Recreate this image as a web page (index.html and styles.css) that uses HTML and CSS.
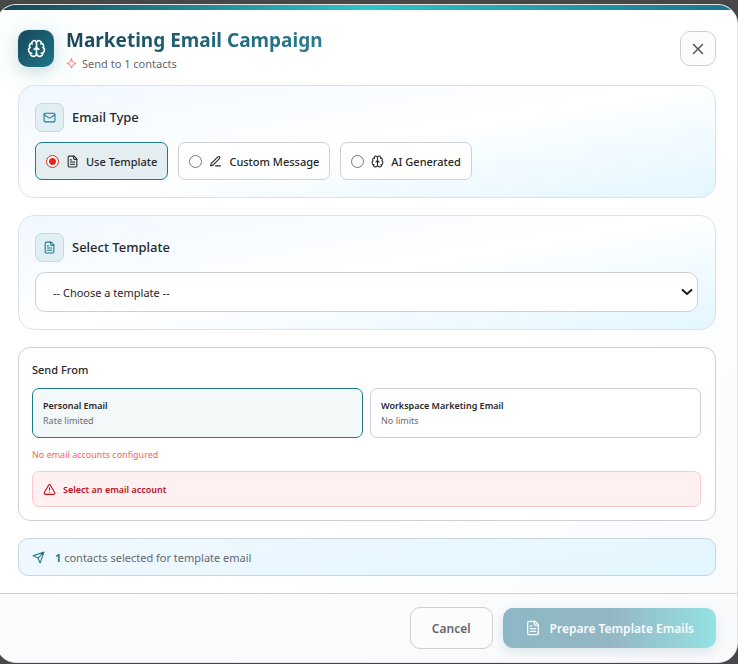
FILE: index.html
```html
<!DOCTYPE html>
<html lang="en">
<head>
    <meta charset="UTF-8">
    <meta name="viewport" content="width=device-width, initial-scale=1.0">
    <title>Marketing Email Campaign</title>
    <link rel="stylesheet" href="styles.css">
</head>
<body>
    <!-- Shared icons -->
    <svg class="sprite" aria-hidden="true">
        <symbol id="icon-brain" viewBox="0 0 24 24">
            <path d="M12 18V5M15 13a4.17 4.17 0 0 1-3-4 4.17 4.17 0 0 1-3 4"/>
            <path d="M17.598 6.5A3 3 0 1 0 12 5a3 3 0 1 0-5.598 1.5"/>
            <path d="M17.997 5.125a4 4 0 0 1 2.526 5.77M18 18a4 4 0 0 0 2-7.464"/>
            <path d="M19.967 17.483A4 4 0 1 1 12 18a4 4 0 1 1-7.967-.517"/>
            <path d="M6 18a4 4 0 0 1-2-7.464M6.003 5.125a4 4 0 0 0-2.526 5.77"/>
        </symbol>
        <symbol id="icon-file" viewBox="0 0 24 24">
            <path d="M15 2H6a2 2 0 0 0-2 2v16a2 2 0 0 0 2 2h12a2 2 0 0 0 2-2V7Z"/>
            <path d="M14 2v4a2 2 0 0 0 2 2h4M10 9H8M16 13H8M16 17H8"/>
        </symbol>
    </svg>

    <div class="modal" role="dialog" aria-labelledby="modal-title">
        <div class="accent-bar"></div>

        <div class="modal-body">
            <header class="modal-header">
                <div class="logo">
                    <svg class="icon"><use href="#icon-brain"/></svg>
                </div>
                <div class="heading">
                    <h1 id="modal-title">Marketing Email Campaign</h1>
                    <p>
                        <svg class="icon sparkle" viewBox="0 0 24 24"><path d="M12 2 14.2 8.2Q14.8 9.4 16 9.9L22 12 16 14.1Q14.8 14.6 14.2 15.8L12 22 9.8 15.8Q9.2 14.6 8 14.1L2 12 8 9.9Q9.2 9.4 9.8 8.2Z"/></svg>
                        Send to 1 contacts
                    </p>
                </div>
                <button type="button" class="close-btn" aria-label="Close">
                    <svg class="icon" viewBox="0 0 24 24"><path d="M18 6 6 18M6 6l12 12"/></svg>
                </button>
            </header>

            <section class="panel">
                <div class="panel-title">
                    <span class="panel-icon">
                        <svg class="icon" viewBox="0 0 24 24"><rect x="2" y="4" width="20" height="16" rx="2"/><path d="m22 7-8.97 5.7a1.94 1.94 0 0 1-2.06 0L2 7"/></svg>
                    </span>
                    <h2>Email Type</h2>
                </div>
                <div class="options">
                    <label class="option active">
                        <input type="radio" name="emailType" checked>
                        <svg class="icon"><use href="#icon-file"/></svg>
                        Use Template
                    </label>
                    <label class="option">
                        <input type="radio" name="emailType">
                        <svg class="icon" viewBox="0 0 24 24"><path d="M12 20h9M16.376 3.622a1 1 0 0 1 3.002 3.002L7.368 18.635a2 2 0 0 1-.855.506l-2.872.838a.5.5 0 0 1-.62-.62l.838-2.872a2 2 0 0 1 .506-.854Z"/></svg>
                        Custom Message
                    </label>
                    <label class="option">
                        <input type="radio" name="emailType">
                        <svg class="icon"><use href="#icon-brain"/></svg>
                        AI Generated
                    </label>
                </div>
            </section>

            <section class="panel">
                <div class="panel-title">
                    <span class="panel-icon">
                        <svg class="icon"><use href="#icon-file"/></svg>
                    </span>
                    <h2><label for="template">Select Template</label></h2>
                </div>
                <div class="select-wrap">
                    <select id="template">
                        <option>-- Choose a template --</option>
                    </select>
                    <svg class="chevron" viewBox="0 0 12 8"><path d="M1 1.5 6 6l5-4.5"/></svg>
                </div>
            </section>

            <section class="send-from">
                <h3>Send From</h3>
                <div class="accounts">
                    <button type="button" class="account active">
                        <strong>Personal Email</strong>
                        <span>Rate limited</span>
                    </button>
                    <button type="button" class="account">
                        <strong>Workspace Marketing Email</strong>
                        <span>No limits</span>
                    </button>
                </div>
                <p class="error-text">No email accounts configured</p>
                <div class="alert">
                    <svg class="icon" viewBox="0 0 24 24"><path d="m21.73 18-8-14a2 2 0 0 0-3.48 0l-8 14A2 2 0 0 0 4 21h16a2 2 0 0 0 1.73-3M12 9v4M12 17h.01"/></svg>
                    Select an email account
                </div>
            </section>

            <div class="summary">
                <svg class="icon" viewBox="0 0 24 24"><path d="M22 2 15 22 11 13 2 9ZM22 2 11 13"/></svg>
                <span><b>1</b> contacts selected for template email</span>
            </div>
        </div>

        <footer class="modal-footer">
            <button type="button" class="cancel-btn">Cancel</button>
            <button type="button" class="submit-btn">
                <svg class="icon"><use href="#icon-file"/></svg>
                Prepare Template Emails
            </button>
        </footer>
    </div>
</body>
</html>
```

FILE: styles.css
```css
* {
    box-sizing: border-box;
}
body {
    margin: 0;
    padding-top: 4px;
    background-color: #474747;
    color: #27272a;
    font-family: "Segoe UI", "Noto Sans", sans-serif;
    font-size: 11px;
    overflow: hidden;
}
h1, h2, h3, p {
    margin: 0;
}
button, select {
    font-family: inherit;
    cursor: pointer;
}
.sprite {
    display: none;
}
.icon {
    width: 13px;
    height: 13px;
    flex: none;
    fill: none;
    stroke: currentColor;
    stroke-width: 2;
    stroke-linecap: round;
    stroke-linejoin: round;
}
.modal {
    margin-left: -4px;
    border: 1px solid #e2e5e8;
    border-radius: 20px;
    background: linear-gradient(135deg, #ffffff 60%, #f8fafc);
    overflow: hidden;
}
.accent-bar {
    height: 5px;
    background: linear-gradient(90deg, #164357, #2ec4c9 50%, #1b7389);
}
.modal-body {
    display: flex;
    flex-direction: column;
    gap: 17px;
    padding: 19px 21px 17px;
}

/* Header */
.modal-header {
    display: flex;
    align-items: center;
    gap: 12px;
    height: 39px;
}
.logo {
    display: flex;
    align-items: center;
    justify-content: center;
    width: 36px;
    height: 37px;
    border-radius: 10px;
    background: linear-gradient(135deg, #1a4759, #1c768a);
    color: #ffffff;
    box-shadow: 0 0 0 1px #e4eef0, 0 6px 14px rgba(26, 71, 89, 0.15), 0 0 40px rgba(46, 196, 182, 0.2);
}
.logo .icon {
    width: 19px;
    height: 19px;
}
.heading {
    flex: 1;
    padding-top: 4px;
}
.heading h1 {
    width: max-content;
    font-size: 19px;
    line-height: 26px;
    font-weight: 700;
    background: linear-gradient(135deg, #1a4456, #2a7f96);
    -webkit-background-clip: text;
    background-clip: text;
    color: transparent;
}
.heading p {
    display: flex;
    align-items: center;
    gap: 5px;
    line-height: 22px;
    color: #66676a;
}
.icon.sparkle {
    width: 11px;
    height: 11px;
    color: #ff6b61;
}
.close-btn {
    display: flex;
    align-items: center;
    justify-content: center;
    width: 36px;
    height: 35px;
    padding: 0;
    border: 1px solid #cdcfd2;
    border-radius: 10px;
    background-color: #fbfcfe;
    color: #555555;
}
.close-btn .icon {
    width: 18px;
    height: 18px;
}

/* Panels */
.panel {
    padding: 17px 17px 17px 16px;
    border: 1px solid #dce3e8;
    border-radius: 16px;
    background: linear-gradient(170deg, #f0f8ff, #ffffff 50%, #e3f6ff);
}
.panel-title {
    display: flex;
    align-items: center;
    gap: 8px;
    margin-bottom: 10px;
}
.panel-title h2 {
    font-size: 13px;
    line-height: 17px;
    font-weight: 500;
}
.panel-icon {
    display: flex;
    align-items: center;
    justify-content: center;
    width: 29px;
    height: 29px;
    border: 1px solid #bfdae2;
    border-radius: 7px;
    background-color: #e1eff4;
    color: #1f7a8c;
}
.options {
    display: flex;
    flex-wrap: wrap;
    gap: 10px;
}
.option {
    display: flex;
    align-items: center;
    gap: 7px;
    height: 38px;
    padding: 0 10px;
    border: 1px solid #cdd0d4;
    border-radius: 7px;
    background-color: #ffffff;
    font-weight: 500;
    cursor: pointer;
}
.option.active {
    border-color: #1f7a8c;
    background-color: #e4eef1;
}
.option input {
    appearance: none;
    width: 13px;
    height: 13px;
    margin: 0;
    border: 1px solid #767676;
    border-radius: 50%;
    background-color: #ffffff;
}
.option input:checked {
    border-color: #e8231a;
    background: radial-gradient(circle, #e8231a 3px, #ffffff 4px);
}
.select-wrap {
    position: relative;
}
.select-wrap select {
    appearance: none;
    display: block;
    width: 100%;
    height: 40px;
    padding: 0 17px;
    border: 1px solid #cdd0d4;
    border-radius: 10px;
    background-color: #ffffff;
    color: #27272a;
    font-size: 11px;
}
.chevron {
    position: absolute;
    top: 16px;
    right: 5px;
    width: 12px;
    height: 8px;
    fill: none;
    stroke: #1a1a1a;
    stroke-width: 2;
    pointer-events: none;
}

/* Sender */
.send-from {
    padding: 13px 14px 13px 13px;
    border: 1px solid #cdd0d4;
    border-radius: 12px;
    background-color: #ffffff;
}
.send-from h3 {
    margin-bottom: 10px;
    font-size: 11px;
    line-height: 17px;
    font-weight: 500;
}
.accounts {
    display: grid;
    grid-template-columns: 1fr 1fr;
    gap: 7px;
}
.account {
    height: 50px;
    padding: 0 10px;
    border: 1px solid #cdd0d4;
    border-radius: 7px;
    background-color: #ffffff;
    color: #27272a;
    font-size: 9px;
    line-height: 15px;
    text-align: left;
}
.account.active {
    border-color: #1f7a8c;
    background-color: #f3f8f9;
}
.account strong, .account span {
    display: block;
}
.account strong {
    font-weight: 600;
}
.account span {
    color: #6b6c6f;
}
.error-text {
    margin: 9px 0;
    font-size: 9px;
    line-height: 15px;
    color: #f8655c;
}
.alert {
    display: flex;
    align-items: center;
    gap: 7px;
    height: 36px;
    padding: 0 10px;
    border: 1px solid #fcc9cb;
    border-radius: 7px;
    background-color: #fff1f2;
    color: #c10f1b;
    font-size: 9px;
    font-weight: 600;
}
.summary {
    display: flex;
    align-items: center;
    gap: 10px;
    height: 38px;
    padding: 0 13px;
    border: 1px solid #c8d3da;
    border-radius: 10px;
    background: linear-gradient(170deg, #f0f8ff, #e3f6ff);
    color: #66676a;
}
.summary b, .summary .icon {
    color: #1f7a8c;
}

/* Footer */
.modal-footer {
    display: flex;
    align-items: center;
    justify-content: flex-end;
    gap: 10px;
    padding: 13px 21px;
    border-top: 1px solid #cdd0d4;
    background: linear-gradient(135deg, #fbfcfe, #f8fafc);
}
.cancel-btn {
    height: 42px;
    padding: 0 21px;
    border: 1px solid #cdd0d4;
    border-radius: 10px;
    background-color: #fbfcfe;
    color: #66676a;
    font-size: 12px;
    font-weight: 600;
}
.submit-btn {
    display: flex;
    align-items: center;
    gap: 9px;
    height: 40px;
    padding: 0 22px;
    border: none;
    border-radius: 10px;
    background: linear-gradient(90deg, #8cb8c5, #94b6c3 50%, #94e2e3);
    color: #f7fcfd;
    font-size: 12px;
    font-weight: 600;
    box-shadow: 0 4px 12px rgba(26, 71, 89, 0.12);
}
.submit-btn .icon {
    width: 16px;
    height: 16px;
}
```
